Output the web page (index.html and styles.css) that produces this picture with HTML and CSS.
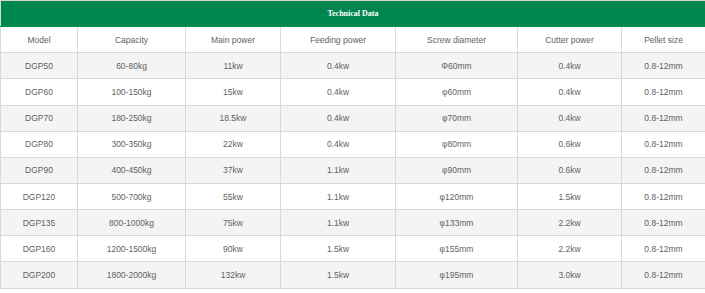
FILE: index.html
```html
<!DOCTYPE html>
<html>
<head>
<meta charset="utf-8">
<link rel="stylesheet" href="styles.css">
</head>
<body>
<table class="spec">
  <colgroup>
    <col class="c1"><col class="c2"><col class="c3"><col class="c4"><col class="c5"><col class="c6"><col class="c7">
  </colgroup>
  <thead>
    <tr class="title"><th colspan="7">Technical Data</th></tr>
    <tr class="head">
      <td>Model</td><td>Capacity</td><td>Main power</td><td>Feeding power</td><td>Screw diameter</td><td>Cutter power</td><td>Pellet size</td>
    </tr>
  </thead>
  <tbody>
    <tr><td>DGP50</td><td>60-80kg</td><td>11kw</td><td>0.4kw</td><td>Φ60mm</td><td>0.4kw</td><td>0.8-12mm</td></tr>
    <tr><td>DGP60</td><td>100-150kg</td><td>15kw</td><td>0.4kw</td><td>φ60mm</td><td>0.4kw</td><td>0.8-12mm</td></tr>
    <tr><td>DGP70</td><td>180-250kg</td><td>18.5kw</td><td>0.4kw</td><td>φ70mm</td><td>0.4kw</td><td>0.8-12mm</td></tr>
    <tr><td>DGP80</td><td>300-350kg</td><td>22kw</td><td>0.4kw</td><td>φ80mm</td><td>0.6kw</td><td>0.8-12mm</td></tr>
    <tr><td>DGP90</td><td>400-450kg</td><td>37kw</td><td>1.1kw</td><td>φ90mm</td><td>0.6kw</td><td>0.8-12mm</td></tr>
    <tr><td>DGP120</td><td>500-700kg</td><td>55kw</td><td>1.1kw</td><td>φ120mm</td><td>1.5kw</td><td>0.8-12mm</td></tr>
    <tr><td>DGP135</td><td>800-1000kg</td><td>75kw</td><td>1.1kw</td><td>φ133mm</td><td>2.2kw</td><td>0.8-12mm</td></tr>
    <tr><td>DGP160</td><td>1200-1500kg</td><td>90kw</td><td>1.5kw</td><td>φ155mm</td><td>2.2kw</td><td>0.8-12mm</td></tr>
    <tr><td>DGP200</td><td>1800-2000kg</td><td>132kw</td><td>1.5kw</td><td>φ195mm</td><td>3.0kw</td><td>0.8-12mm</td></tr>
  </tbody>
</table>
</body>
</html>
```
FILE: styles.css
```css
html, body {
  margin: 0;
  padding: 0;
  background: #ffffff;
}

.spec {
  width: 705px;
  table-layout: fixed;
  border-collapse: collapse;
  font-family: "Liberation Sans", Arial, sans-serif;
  font-size: 8.5px;
  color: #5f5f66;
}

.c1 { width: 77px; }
.c2 { width: 108px; }
.c3 { width: 95px; }
.c4 { width: 115px; }
.c5 { width: 122px; }
.c6 { width: 104px; }
.c7 { width: 84px; }

.spec td,
.spec th {
  border: 1px solid #d9d9d9;
  height: 26.15px;
  padding: 0 4px;
  text-align: center;
  vertical-align: middle;
  box-sizing: border-box;
  white-space: nowrap;
}

.title th {
  background: #00874f;
  color: #ffffff;
  font-family: "Liberation Serif", "Times New Roman", serif;
  font-weight: bold;
  font-size: 8px;
  border-color: #d9d9d9 #d9d9d9 #00874f #d9d9d9;
}

.head td {
  background: #ffffff;
}

.spec tbody tr:nth-child(odd) td {
  background: #f4f4f4;
}

.spec tbody tr:nth-child(even) td {
  background: #ffffff;
}
```
